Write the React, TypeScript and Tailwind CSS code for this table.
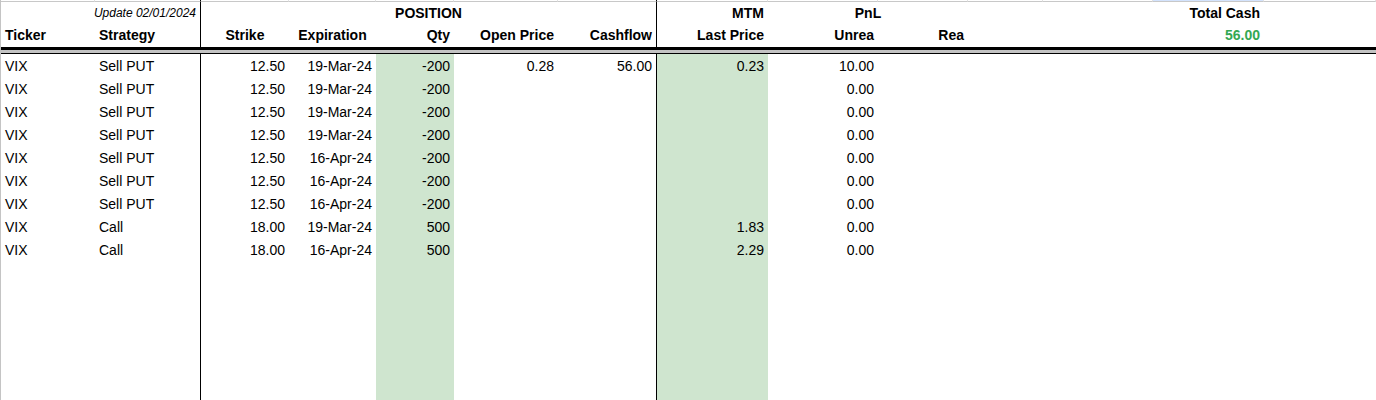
import React from "react";

type Row = {
  ticker: string;
  strategy: string;
  strike: string;
  expiration: string;
  qty: string;
  openPrice: string;
  cashflow: string;
  lastPrice: string;
  unrea: string;
};

const rows: Row[] = [
  { ticker: "VIX", strategy: "Sell PUT", strike: "12.50", expiration: "19-Mar-24", qty: "-200", openPrice: "0.28", cashflow: "56.00", lastPrice: "0.23", unrea: "10.00" },
  { ticker: "VIX", strategy: "Sell PUT", strike: "12.50", expiration: "19-Mar-24", qty: "-200", openPrice: "", cashflow: "", lastPrice: "", unrea: "0.00" },
  { ticker: "VIX", strategy: "Sell PUT", strike: "12.50", expiration: "19-Mar-24", qty: "-200", openPrice: "", cashflow: "", lastPrice: "", unrea: "0.00" },
  { ticker: "VIX", strategy: "Sell PUT", strike: "12.50", expiration: "19-Mar-24", qty: "-200", openPrice: "", cashflow: "", lastPrice: "", unrea: "0.00" },
  { ticker: "VIX", strategy: "Sell PUT", strike: "12.50", expiration: "16-Apr-24", qty: "-200", openPrice: "", cashflow: "", lastPrice: "", unrea: "0.00" },
  { ticker: "VIX", strategy: "Sell PUT", strike: "12.50", expiration: "16-Apr-24", qty: "-200", openPrice: "", cashflow: "", lastPrice: "", unrea: "0.00" },
  { ticker: "VIX", strategy: "Sell PUT", strike: "12.50", expiration: "16-Apr-24", qty: "-200", openPrice: "", cashflow: "", lastPrice: "", unrea: "0.00" },
  { ticker: "VIX", strategy: "Call", strike: "18.00", expiration: "19-Mar-24", qty: "500", openPrice: "", cashflow: "", lastPrice: "1.83", unrea: "0.00" },
  { ticker: "VIX", strategy: "Call", strike: "18.00", expiration: "16-Apr-24", qty: "500", openPrice: "", cashflow: "", lastPrice: "2.29", unrea: "0.00" },
];

const green = "bg-[#cfe5cf]";
const cell = "flex items-center whitespace-nowrap overflow-visible";
const right = `${cell} justify-end pr-[4px]`;
const left = `${cell} justify-start pl-[4px]`;
const center = `${cell} justify-center`;

// data rows sit a pixel lower than the header text
const DataRow = ({ r }: { r: Row }) => (
  <>
    <div className={`${left} pt-px`}>{r.ticker}</div>
    <div className={`${left} pt-px border-r border-r-black`}>{r.strategy}</div>
    <div className={`${right} pt-px`}>{r.strike}</div>
    <div className={`${right} pt-px`}>{r.expiration}</div>
    <div className={`${right} pt-px ${green}`}>{r.qty}</div>
    <div className={`${right} pt-px`}>{r.openPrice}</div>
    <div className={`${right} pt-px pr-[2px] border-r border-r-black`}>{r.cashflow}</div>
    <div className={`${right} pt-px ${green}`}>{r.lastPrice}</div>
    <div className={`${right} pt-px`}>{r.unrea}</div>
    <div />
    <div />
    <div />
    <div />
    <div />
  </>
);

const topCols = ["", "", "", "", "", "", "", "", "", "", "", "", "", ""];

export default function App() {
  return (
    <div
      className="w-[1376px] h-[400px] overflow-hidden bg-white text-black text-[14px] border-l border-l-[#c4c4c4] grid grid-cols-[94px_106px_88px_87px_78px_104px_99px_111px_110px_90px_75px_110px_111px_1fr] grid-rows-[2px_22px_23px_7px_repeat(9,23px)_1fr]"
      style={{ fontFamily: '"Liberation Sans", Arial, sans-serif' }}
    >
      {/* cut-off row above */}
      {topCols.map((_, i) => (
        <div
          key={i}
          className={`border-b border-b-[#c8c8c8] border-r ${i === 1 || i === 6 ? "border-r-black" : "border-r-[#e2e2e2]"} ${i === 12 ? "bg-[#d3e3fd]" : ""}`}
        />
      ))}

      {/* title row */}
      <div />
      <div className={`${right} pr-[3px] border-r border-r-black italic text-[12px]`}>Update 02/01/2024</div>
      <div className={`${center} col-span-5 border-r border-r-black font-bold`}>POSITION</div>
      <div className={`${right} font-bold`}>MTM</div>
      <div className={`${center} col-span-2 font-bold`}>PnL</div>
      <div />
      <div />
      <div className={`${right} font-bold`}>Total Cash</div>
      <div />

      {/* header row */}
      <div className={`${left} font-bold`}>Ticker</div>
      <div className={`${left} border-r border-r-black font-bold`}>Strategy</div>
      <div className={`${center} font-bold`}>Strike</div>
      <div className={`${center} font-bold`}>Expiration</div>
      <div className={`${right} font-bold`}>Qty</div>
      <div className={`${right} font-bold`}>Open Price</div>
      <div className={`${right} pr-[2px] border-r border-r-black font-bold`}>Cashflow</div>
      <div className={`${right} font-bold`}>Last Price</div>
      <div className={`${right} font-bold`}>Unrea</div>
      <div className={`${right} font-bold`}>Rea</div>
      <div />
      <div />
      <div className={`${right} font-bold text-[#34a853]`}>56.00</div>
      <div />

      {/* double border under header */}
      <div className="col-span-full border-t-[3px] border-b border-black bg-[#c3c3c3]" />

      {rows.map((r, i) => (
        <DataRow key={i} r={r} />
      ))}

      {/* empty space below */}
      <div />
      <div className="border-r border-r-black" />
      <div />
      <div />
      <div className={green} />
      <div />
      <div className="border-r border-r-black" />
      <div className={green} />
      <div />
      <div />
      <div />
      <div />
      <div />
      <div />
    </div>
  );
}
